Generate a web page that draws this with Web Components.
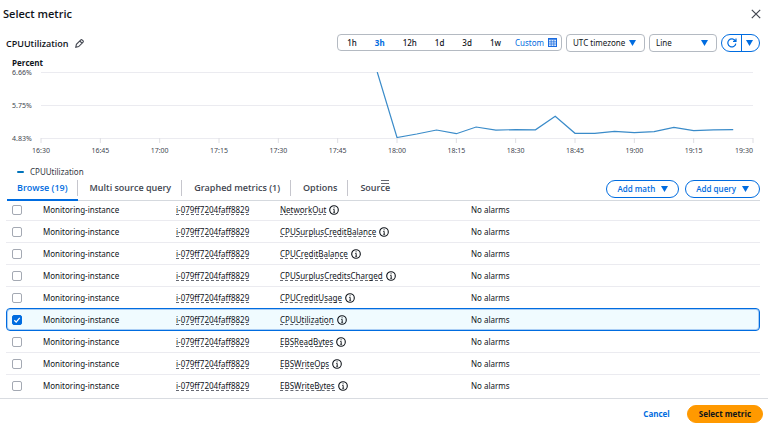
<!DOCTYPE html>
<html lang="en">
<head>
<meta charset="utf-8">
<meta name="viewport" content="width=device-width, initial-scale=1">
<title>Select metric</title>
<style>
  html, body { margin: 0; }
  body {
    --blue: #006ce0;
    --ink: #0f141a;
    --heading: "Open Sans", "Noto Sans", sans-serif;
    font-family: "Noto Sans", "Open Sans", sans-serif;
    font-size: 8px;
    line-height: 12px;
    color: var(--ink);
    background: #fff;
  }
</style>
</head>
<body>
<metric-dialog></metric-dialog>

<script>
const caret = '<svg class="caret" width="7" height="6" viewBox="0 0 7 6" aria-hidden="true"><path d="M0 0h7L3.5 6z" fill="#006ce0"/></svg>';

function define(name, html, setup) {
  const template = document.createElement('template');
  template.innerHTML = html;
  customElements.define(name, class extends HTMLElement {
    constructor() {
      super();
      this.attachShadow({ mode: 'open' }).append(template.content.cloneNode(true));
    }
    connectedCallback() {
      if (setup && !this.ready) { this.ready = true; setup(this, this.shadowRoot); }
    }
  });
}

define('pill-button', `
  <style>
    :host { display: block; }
    button {
      display: flex; align-items: center; justify-content: center; gap: 6px;
      height: 18px; padding: 0 11px; box-sizing: border-box;
      border: 1px solid var(--blue); border-radius: 9px; background: #fff;
      color: var(--blue); font-family: var(--heading); font-size: 8px; line-height: 12px;
      font-weight: 700; white-space: nowrap; cursor: pointer;
    }
    .caret { display: none; }
    :host([menu]) button { font-weight: 600; padding: 0 10px; }
    :host([menu]) .caret { display: block; }
    :host([variant="link"]) button { border-color: transparent; background: none; }
    :host([variant="primary"]) button { border-color: #ff9900; background: #ff9900; color: var(--ink); }
  </style>
  <button type="button"><slot></slot>${caret}</button>`);

define('range-picker', `
  <style>
    :host {
      display: flex; height: 17px; box-sizing: border-box; padding: 0 4px 0 0;
      border: 1px solid #b4bac2; border-radius: 4px;
    }
    button {
      border: 0; padding: 0 9px; background: none; color: var(--ink);
      font-family: inherit; font-size: 8px; font-weight: 500; cursor: pointer;
      display: flex; align-items: center; gap: 4px;
    }
    button[aria-pressed="true"] { color: var(--blue); font-weight: 700; }
    .custom { color: var(--blue); padding: 0 0 0 5px; font-weight: 400; }
  </style>
  <button type="button">1h</button>
  <button type="button" aria-pressed="true">3h</button>
  <button type="button">12h</button>
  <button type="button">1d</button>
  <button type="button">3d</button>
  <button type="button">1w</button>
  <button type="button" class="custom">Custom
    <svg width="9" height="9" viewBox="0 0 9 9" aria-hidden="true"><rect x=".5" y=".5" width="8" height="8" fill="#dbe9fb" stroke="#1a6be0"/><path d="M0 1.500h9M1 3.800h7M1 6h7M3.200 2v6M5.800 2v6" stroke="#1a6be0" stroke-width=".7" fill="none"/></svg>
  </button>`);

define('drop-down', `
  <style>
    :host { display: grid; align-items: center; }
    select, .caret { grid-area: 1 / 1; }
    select {
      appearance: none; width: 100%; height: 18px; box-sizing: border-box; margin: 0;
      padding: 0 16px 0 6px; border: 1px solid #b4bac2; border-radius: 4px; background: #fff;
      color: var(--ink); font-family: inherit; font-size: 8px; font-weight: 400;
    }
    .caret { justify-self: end; margin-right: 9px; pointer-events: none; }
  </style>
  <select></select>${caret}`,
  (host, root) => {
    const select = root.querySelector('select');
    select.setAttribute('aria-label', host.getAttribute('label'));
    select.add(new Option(host.getAttribute('value')));
  });

define('refresh-control', `
  <style>
    :host {
      display: grid; grid-template-columns: 19px 18px; height: 18px; box-sizing: border-box;
      border: 1px solid var(--blue); border-radius: 9px; overflow: hidden;
    }
    button { border: 0; padding: 0; margin: 0; background: none; display: grid; place-items: center; cursor: pointer; }
    button + button { border-left: 1px solid var(--blue); padding-right: 2px; }
  </style>
  <button type="button" aria-label="Refresh">
    <svg width="10" height="10" viewBox="0 0 10 10" fill="none" stroke="#006ce0" stroke-width="1.2" aria-hidden="true"><path d="M8.800 5.600A4 4 0 1 1 8.300 2.900M9 .4v3H6"/></svg>
  </button>
  <button type="button" aria-label="Refresh options">${caret}</button>`);

define('metric-chart', `
  <style>
    :host { display: block; padding: 0 15px 0 12px; }
    h3 { margin: 0; font-family: var(--heading); font-size: 8px; line-height: 12px; font-weight: 700; }
    .body { display: grid; grid-template-columns: 29px 1fr; height: 97px; }
    .body > svg { display: block; width: 100%; height: 97px; overflow: visible; }
    text { font-size: 7px; fill: #424650; }
    .grid { stroke: #ebebf0; stroke-width: 1; }
    .tick { stroke: #dedee3; stroke-width: 1; }
    .legend { display: flex; align-items: center; gap: 6px; padding-left: 5px; font-size: 8px; line-height: 12px; font-weight: 400; color: #333843; }
    .legend i { width: 7px; height: 2px; background: #0073bb; border-radius: 1px; }
  </style>
  <h3>Percent</h3>
  <div class="body">
    <svg class="y"><text y="6">6.66%</text><text y="39">5.75%</text><text y="72">4.83%</text></svg>
    <svg class="plot" role="img" aria-label="CPUUtilization over time">
      <g class="grid">
        <line x1="0" x2="100%" y1="3.500" y2="3.500"/>
        <line x1="0" x2="100%" y1="36.500" y2="36.500"/>
        <line x1="0" x2="100%" y1="69.500" y2="69.500"/>
      </g>
      <svg y="3" height="66" width="100%" viewBox="0 0 36 66" preserveAspectRatio="none">
        <polyline fill="none" stroke="#3a8bc9" stroke-width="1.2" vector-effect="non-scaling-stroke"/>
      </svg>
    </svg>
  </div>
  <div class="legend"><i></i>CPUUtilization</div>`,
  (host, root) => {
    const values = [0, 65.5, 62, 58, 61.7, 55, 58.2, 57.6, 57.8, 44.3, 61.3, 61.3, 59.4, 60.6, 59.6, 55.4, 58.7, 57.8, 57.6];
    root.querySelector('polyline').setAttribute('points', values.map((v, i) => `${i + 17},${v}`).join(' '));
    const plot = root.querySelector('.plot');
    const ns = 'http://www.w3.org/2000/svg';
    for (let i = 0; i <= 12; i++) {
      const minutes = 16 * 60 + 30 + i * 15;
      const x = `${i / 12 * 100}%`;
      const tick = document.createElementNS(ns, 'line');
      for (const [k, v] of Object.entries({ x1: x, x2: x, y1: 69, y2: 74, class: 'tick' })) tick.setAttribute(k, v);
      const label = document.createElementNS(ns, 'text');
      for (const [k, v] of Object.entries({ x, y: 84, 'text-anchor': i === 12 ? 'end' : 'middle' })) label.setAttribute(k, v);
      label.textContent = `${Math.floor(minutes / 60)}:${String(minutes % 60).padStart(2, '0')}`;
      plot.append(tick, label);
    }
  });

define('tab-item', `
  <style>
    :host { display: flex; align-items: stretch; }
    button {
      position: relative; border: 0; margin: 0; padding: 0 11px 3px 12px; height: 23px; background: none;
      font-family: var(--heading); font-size: 9px; line-height: 12px; font-weight: 600; color: #424650; cursor: pointer;
      display: flex; align-items: center; white-space: nowrap;
    }
    :host(:not([last])) button::before { content: ""; position: absolute; right: 0; top: 2px; height: 16px; width: 1px; background: #c6c6cd; }
    :host([selected]) button { color: var(--blue); padding-left: 10px; padding-right: 10px; }
    :host([selected]) button::after { content: ""; position: absolute; left: 0; right: 0; bottom: 0; height: 2px; background: var(--blue); }
  </style>
  <button type="button" role="tab"><slot></slot></button>`,
  (host, root) => root.querySelector('button').setAttribute('aria-selected', host.hasAttribute('selected')));

define('metric-table', `
  <style>
    :host { display: block; overflow: hidden; padding: 0 8px 0 6px; }
    table { width: 100%; table-layout: fixed; border-collapse: separate; border-spacing: 0; margin-top: -3px; }
    .c1 { width: 37px; } .c2 { width: 133px; } .c3 { width: 104px; } .c4 { width: 191px; }
    td { height: 21px; padding: 0; border-top: 1px solid #ebebf0; vertical-align: middle; font-weight: 400; white-space: nowrap; }
    tr { position: relative; }
    input {
      appearance: none; display: block; width: 10px; height: 10px; margin: 0 0 0 6px; box-sizing: border-box;
      border: 1px solid #a4a9b3; border-radius: 2px; background: #fff;
    }
    input:checked {
      border-color: var(--blue);
      background: var(--blue) url("data:image/svg+xml,%3Csvg xmlns='http://www.w3.org/2000/svg' viewBox='0 0 8 8'%3E%3Cpath d='M1.3 4.2l1.9 1.9 3.5-4.2' fill='none' stroke='white' stroke-width='1.3'/%3E%3C/svg%3E");
    }
    .term {
      display: block; border: 0; border-bottom: 1px dashed #656871; padding: 0; margin: 0; background: none; color: inherit;
      font-family: inherit; font-size: 8px; line-height: 9px; font-weight: 400; cursor: pointer;
    }
    .metric { display: flex; align-items: center; gap: 3px; }
    .info { border: 0; padding: 0; background: none; display: block; cursor: pointer; }
    .info svg { display: block; }
    tr.on { isolation: isolate; }
    tr.on td { border-top-color: transparent; }
    tr.on + tr td { border-top-color: transparent; }
    tr.on td:first-child::before {
      content: ""; position: absolute; z-index: -1; inset: 0 0 -1px 0; box-sizing: border-box;
      border: 1px solid var(--blue); border-radius: 4px; background: #f0fbff;
      box-shadow: inset 0 0 0 1px #a9cdf5; pointer-events: none;
    }
  </style>
  <table aria-label="Metrics">
    <colgroup><col class="c1"><col class="c2"><col class="c3"><col class="c4"><col></colgroup>
    <tbody></tbody>
  </table>`,
  (host, root) => {
    const names = ['NetworkOut', 'CPUSurplusCreditBalance', 'CPUCreditBalance', 'CPUSurplusCreditsCharged', 'CPUCreditUsage', 'CPUUtilization', 'EBSReadBytes', 'EBSWriteOps', 'EBSWriteBytes'];
    root.querySelector('tbody').innerHTML = names.map(name => {
      const on = name === 'CPUUtilization';
      return `<tr class="${on ? 'on' : ''}">
        <td><input type="checkbox" aria-label="Select ${name}"${on ? ' checked' : ''}></td>
        <td>Monitoring-instance</td>
        <td><button type="button" class="term">i-079ff7204faff8829</button></td>
        <td><div class="metric"><button type="button" class="term">${name}</button><button type="button" class="info" aria-label="About ${name}">
          <svg width="10" height="10" viewBox="0 0 10 10" fill="none" stroke="#0f141a" aria-hidden="true"><circle cx="5" cy="5" r="4.300" stroke-width="1.1"/><path d="M4.200 4.400h1v2.800M4.200 7.300h1.900M4.600 2.800h1" stroke-width=".9"/></svg></button></div></td>
        <td>No alarms</td></tr>`;
    }).join('');
  });

define('metric-dialog', `
  <style>
    :host { display: flex; flex-direction: column; min-height: 100vh; }
    header { display: flex; align-items: center; justify-content: space-between; height: 27px; padding: 0 7px 0 3px; }
    h1 { margin: 0; font-family: var(--heading); font-size: 11px; line-height: 15px; font-weight: 600; }
    .plain { border: 0; padding: 0; background: none; display: block; cursor: pointer; }
    .plain svg { display: block; }
    .toolbar { display: flex; align-items: center; height: 30px; padding: 1px 8px 0 6px; box-sizing: border-box; }
    h2 { margin: 0 auto 0 0; font-family: var(--heading); font-size: 9px; line-height: 12px; font-weight: 600; display: flex; align-items: center; gap: 6px; padding-top: 2px; }
    .tools { display: flex; align-items: center; gap: 4px; }
    .tabs { position: relative; display: flex; justify-content: space-between; margin: 0 8px 0 7px; border-bottom: 1px solid #d5d9de; }
    .list { display: flex; margin-bottom: -1px; }
    .actions { display: flex; gap: 6px; padding-top: 2px; height: 18px; }
    .handle { position: absolute; left: 50%; top: 1px; margin-left: -3px; }
    metric-table { flex: 1; }
    footer { display: flex; justify-content: flex-end; align-items: center; gap: 5px; height: 28px; padding: 3px 5px 0 0; border-top: 1px solid #d9dce1; box-sizing: border-box; }
    .zone { width: 79px; } .kind { width: 68px; }
  </style>
  <header>
    <h1>Select metric</h1>
    <button type="button" class="plain" aria-label="Close"><svg width="10" height="10" viewBox="0 0 10 10" stroke="#424650" stroke-width="1.2"><path d="M.8.8l8.400 8.400M9.200.8L.8 9.200"/></svg></button>
  </header>
  <div class="toolbar">
    <h2>CPUUtilization
      <button type="button" class="plain" aria-label="Edit title"><svg width="9" height="9" viewBox="0 0 9 9" fill="none" stroke="#424650" stroke-width="1.1"><path d="M.8 8.200l.6-2.900 4.200-4.200c.6-.6 1.100-.6 1.700 0l.6.6c.6.6.6 1.100 0 1.700L3.700 7.600zM4.800 2l2.200 2.200"/></svg></button>
    </h2>
    <div class="tools">
      <range-picker></range-picker>
      <drop-down class="zone" label="Time zone" value="UTC timezone"></drop-down>
      <drop-down class="kind" label="Graph type" value="Line"></drop-down>
      <refresh-control></refresh-control>
    </div>
  </div>
  <metric-chart></metric-chart>
  <div class="tabs">
    <div class="list" role="tablist">
      <tab-item selected>Browse (19)</tab-item>
      <tab-item>Multi source query</tab-item>
      <tab-item>Graphed metrics (1)</tab-item>
      <tab-item>Options</tab-item>
      <tab-item last>Source</tab-item>
    </div>
    <div class="actions">
      <pill-button menu>Add math</pill-button>
      <pill-button menu>Add query</pill-button>
    </div>
    <svg class="handle" width="8" height="6" viewBox="0 0 8 6" aria-hidden="true"><path d="M0 1.500h8M0 4.500h8" stroke="#656871"/></svg>
  </div>
  <metric-table></metric-table>
  <footer>
    <pill-button variant="link">Cancel</pill-button>
    <pill-button variant="primary">Select metric</pill-button>
  </footer>`);
</script>
</body>
</html>
